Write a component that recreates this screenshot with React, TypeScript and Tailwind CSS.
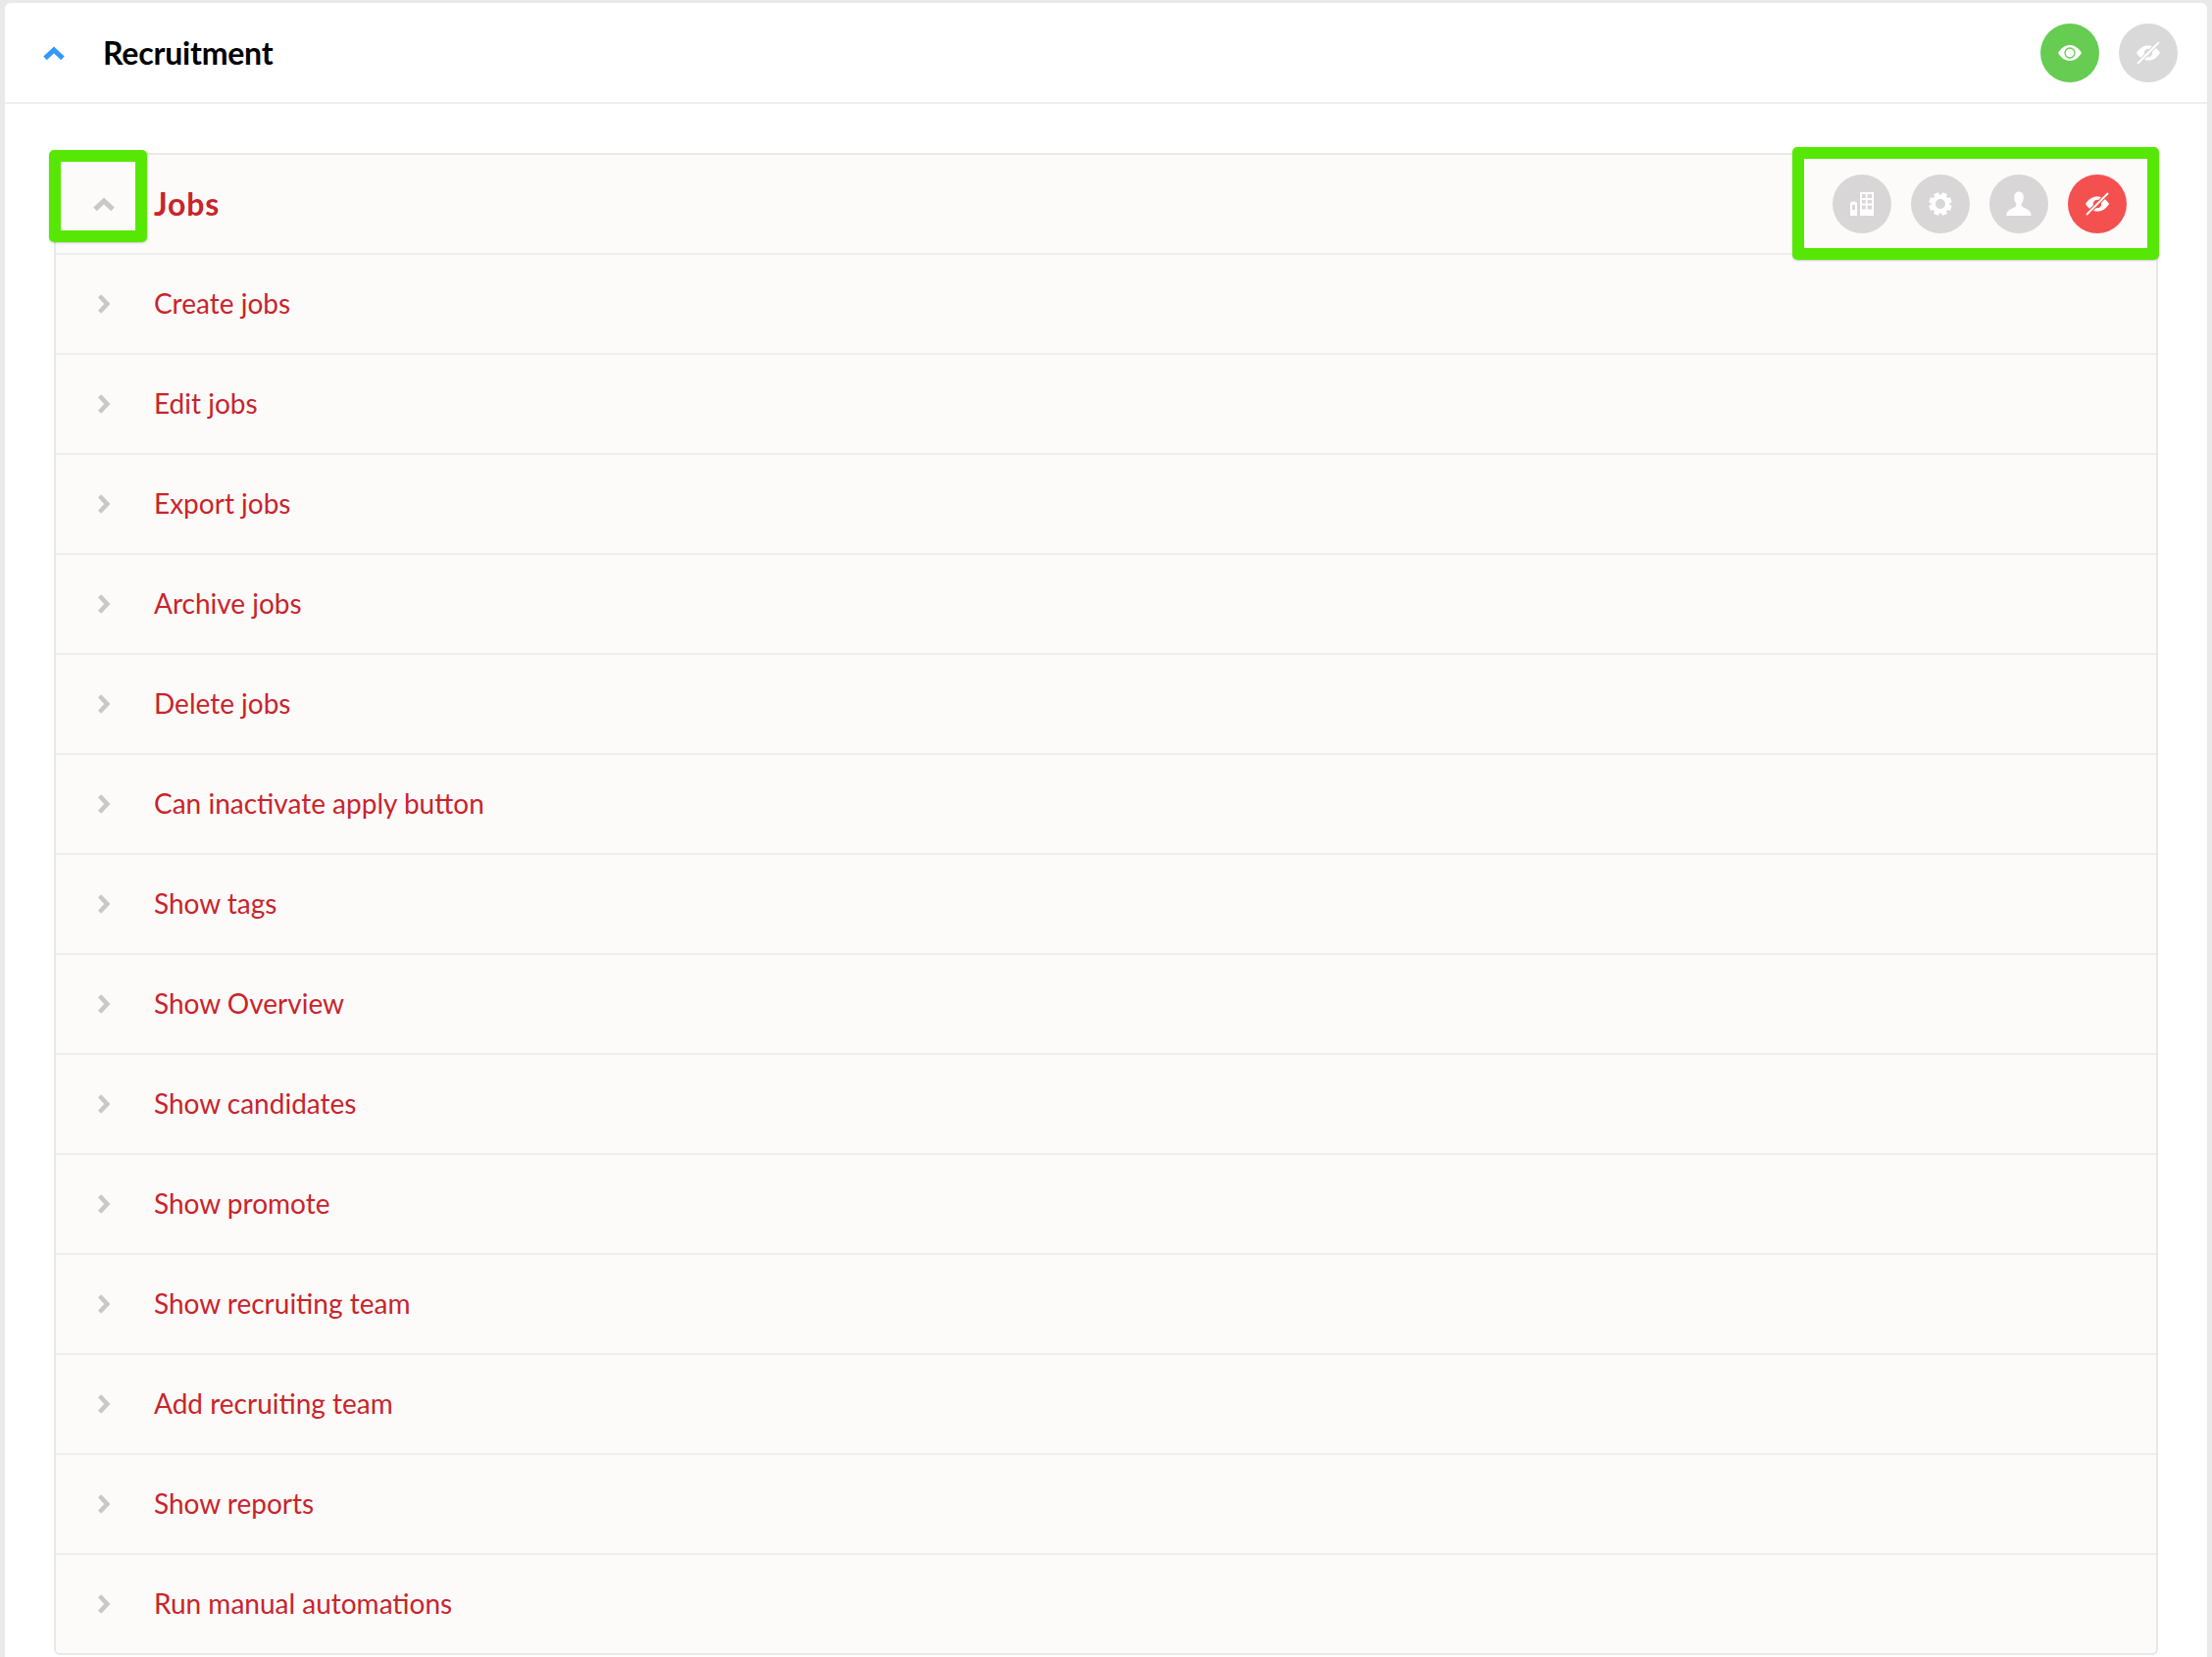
const rows = [
  "Create jobs",
  "Edit jobs",
  "Export jobs",
  "Archive jobs",
  "Delete jobs",
  "Can inactivate apply button",
  "Show tags",
  "Show Overview",
  "Show candidates",
  "Show promote",
  "Show recruiting team",
  "Add recruiting team",
  "Show reports",
  "Run manual automations",
];

function Chevron({ dir, color }: { dir: "up" | "right"; color: string }) {
  const size = dir === "up" ? 24 : 22;
  return (
    <svg width={size} height={size} viewBox="0 0 20 20" fill="none" stroke={color} strokeWidth="4.2" strokeLinejoin="miter">
      {dir === "up" ? <polyline points="2.5,14.5 10,7.5 17.5,14.5" /> : <polyline points="6,2.5 13,10 6,17.5" />}
    </svg>
  );
}

function EyeIcon({ ring }: { ring: string }) {
  return (
    <svg width="26" height="26" viewBox="0 0 26 26">
      <path d="M1 13C4 8 8.2 5 13 5S22 8 25 13C22 18 17.8 21 13 21S4 18 1 13Z" fill="#fff" />
      <circle cx="13" cy="13" r="5" fill="#fff" stroke={ring} strokeWidth="1.3" />
    </svg>
  );
}

function EyeOffIcon({ bg }: { bg: string }) {
  return (
    <svg width="26" height="26" viewBox="0 0 26 26">
      <path d="M1 13C4 8 8.2 5.5 13 5.5S22 8 25 13C22 18 17.8 20.5 13 20.5S4 18 1 13Z" fill="#fff" />
      <circle cx="13" cy="13" r="5" fill={bg} stroke="#fff" strokeWidth="1.5" />
      <line x1="24" y1="2" x2="2" y2="24" stroke={bg} strokeWidth="4" />
      <line x1="23.5" y1="2.5" x2="2.5" y2="23.5" stroke="#fff" strokeWidth="1.8" strokeLinecap="round" />
    </svg>
  );
}

function BuildingIcon() {
  return (
    <svg width="24" height="24" viewBox="0 0 24 24">
      <path d="M0 24V11.5C0 10 1 9.5 3.5 9.5S7 10 7 11.5V24ZM2 13V18H5V13Z" fill="#fff" fillRule="evenodd" />
      <path
        fillRule="evenodd"
        fill="#fff"
        d="M10 0H24V24H10ZM12 2V6H15.8V2ZM17.6 2V6H22V2ZM12 8V11.5H15.8V8ZM17.6 8V11.5H22V8ZM12 13.5V17.5H15.8V13.5ZM17.6 13.5V17.5H22V13.5Z"
      />
    </svg>
  );
}

function GearIcon() {
  const teeth = [0, 45, 90, 135, 180, 225, 270, 315];
  return (
    <svg width="26" height="26" viewBox="0 0 26 26">
      {teeth.map((a) => (
        <rect key={a} x="10.2" y="1.2" width="5.6" height="6" rx="1" fill="#fff" transform={`rotate(${a + 22.5} 13 13)`} />
      ))}
      <circle cx="13" cy="13" r="7.25" fill="none" stroke="#fff" strokeWidth="4.5" />
    </svg>
  );
}

function PersonIcon() {
  return (
    <svg width="26" height="26" viewBox="0 0 26 26">
      <path
        d="M13 0.5C16 0.5 17.8 2.8 17.8 6C17.8 8.5 17 11 15.8 12.5C15.4 13.2 15.6 15.3 16.6 16C18.5 17.2 24 18.5 25.3 22.5C25.6 23.5 25.6 24.2 25.6 25H0.4C0.4 24.2 0.4 23.5 0.7 22.5C2 18.5 7.5 17.2 9.4 16C10.4 15.3 10.6 13.2 10.2 12.5C9 11 8.2 8.5 8.2 6C8.2 2.8 10 0.5 13 0.5Z"
        fill="#fff"
      />
    </svg>
  );
}

function Circle({ className, children }: { className: string; children: React.ReactNode }) {
  return <div className={`flex h-[60px] w-[60px] items-center justify-center rounded-full ${className}`}>{children}</div>;
}

export default function App() {
  return (
    <div
      className="relative h-[1690px] w-full overflow-hidden bg-[#e9e9e9] pl-[5px] pr-[5px] pt-[3px]"
      style={{ fontFamily: "Lato, 'Open Sans', sans-serif" }}
    >
      <div className="h-[1700px] rounded-md bg-white">
        <div className="flex h-[103px] items-center border-b-2 border-[#eeeeee] pl-[38px] pr-[30px]">
          <div className="flex w-[62px] items-center">
            <Chevron dir="up" color="#3399ff" />
          </div>
          <div className="flex-1 text-[32px] font-bold tracking-[-0.2px] text-black">Recruitment</div>
          <div className="flex gap-5">
            <Circle className="bg-[#66cc52]">
              <EyeIcon ring="#66cc52" />
            </Circle>
            <Circle className="bg-[#d9d9d9]">
              <EyeOffIcon bg="#d9d9d9" />
            </Circle>
          </div>
        </div>

        <div className="pl-[50px] pr-[50px] pt-[50px]">
          <div className="rounded-b-md border-x-2 border-y-2 border-[#e8e8e8] bg-[#fcfbfa]">
            <div className="flex h-[102px] items-center border-b-2 border-[#eeeeee] pl-[37px] pr-[30px]">
              <div className="flex w-[63px] items-center">
                <Chevron dir="up" color="#c8c8c8" />
              </div>
              <div className="flex-1 text-[32px] font-bold tracking-[0.8px] text-[#c9242b]">Jobs</div>
              <div className="flex gap-5">
                <Circle className="bg-[#d8d6d6]">
                  <BuildingIcon />
                </Circle>
                <Circle className="bg-[#d8d6d6]">
                  <GearIcon />
                </Circle>
                <Circle className="bg-[#d8d6d6]">
                  <PersonIcon />
                </Circle>
                <Circle className="bg-[#f55050]">
                  <EyeOffIcon bg="#f55050" />
                </Circle>
              </div>
            </div>
            {rows.map((label) => (
              <div key={label} className="flex h-[102px] items-center border-b-2 border-[#eeeeee] pl-[38px] last:h-[100px] last:border-b-0">
                <div className="flex w-[62px] items-center">
                  <Chevron dir="right" color="#c8c8c8" />
                </div>
                <div className="pb-[3px] text-[28px] text-[#c9242b]">{label}</div>
              </div>
            ))}
          </div>
        </div>
      </div>

      <div className="absolute left-[50px] top-[153px] h-[94px] w-[100px] rounded-[5px] border-[12px] border-[#56e804] shadow-[0_1px_2px_rgba(0,0,0,0.2)]" />
      <div className="absolute left-[1828px] top-[150px] h-[115px] w-[374px] rounded-[5px] border-[12px] border-[#56e804] shadow-[0_1px_2px_rgba(0,0,0,0.2)]" />
    </div>
  );
}
